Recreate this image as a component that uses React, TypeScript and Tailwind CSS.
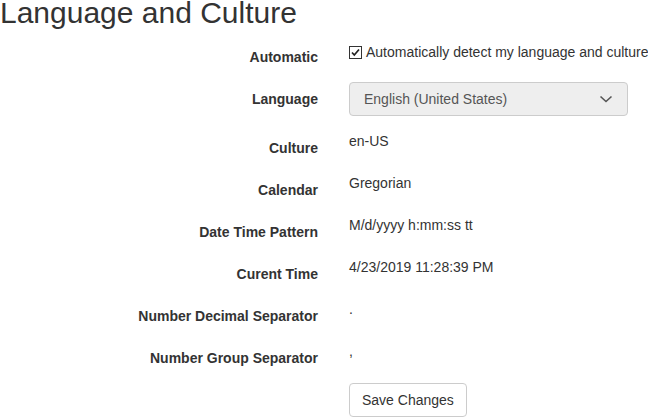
import React from "react";

const Label = ({ children, pt = "pt-[7px]" }: { children: React.ReactNode; pt?: string }) => (
  <div className={`w-[318px] shrink-0 text-right font-bold text-[14px] leading-[20px] text-[#333] ${pt}`}>{children}</div>
);

const Row = ({ label, children }: { label: string; children: React.ReactNode }) => (
  <div className="flex gap-[31px] mb-[15px]">
    <Label>{label}</Label>
    <div className="text-[14px] leading-[20px] text-[#333]">{children}</div>
  </div>
);

export default function App() {
  return (
    <div className="w-[648px] h-[417px] overflow-hidden bg-white text-[#333]" style={{ fontFamily: '"Liberation Sans", Arial, sans-serif' }}>
      <h2 className="text-[30px] leading-[25px] font-normal text-[#333] mb-[15px] whitespace-nowrap">Language and Culture</h2>

      <div className="flex gap-[31px] h-[42px]">
        <Label>Automatic</Label>
        <div className="flex items-start pt-[2px]">
          <div className="flex items-center h-[20px]">
            <span className="w-[13px] h-[13px] border border-[#333] bg-white flex items-center justify-center mr-[4px]">
              <svg width="11" height="11" viewBox="0 0 11 11">
                <path d="M2 5.5 L4.3 8 L9 2.5" fill="none" stroke="#222" strokeWidth="1.7" />
              </svg>
            </span>
            <span className="text-[14px] leading-[20px] text-[#333] whitespace-nowrap">Automatically detect my language and culture</span>
          </div>
        </div>
      </div>

      <div className="flex gap-[31px] mb-[15px]">
        <Label>Language</Label>
        <div className="w-[279px] h-[34px] bg-[#eee] border border-[#ccc] rounded-[4px] flex items-center justify-between pl-[14px] pr-[14px]">
          <span className="text-[14px] text-[#555]">English (United States)</span>
          <svg width="14" height="10" viewBox="0 0 14 10">
            <path d="M1.5 2.5 L7 7.5 L12.5 2.5" fill="none" stroke="#555" strokeWidth="1.6" />
          </svg>
        </div>
      </div>

      <Row label="Culture">en-US</Row>
      <Row label="Calendar">Gregorian</Row>
      <Row label="Date Time Pattern">M/d/yyyy h:mm:ss tt</Row>
      <Row label="Curent Time">4/23/2019 11:28:39 PM</Row>
      <Row label="Number Decimal Separator">.</Row>
      <Row label="Number Group Separator">,</Row>

      <div className="flex gap-[31px]">
        <div className="w-[318px] shrink-0" />
        <button className="h-[34px] px-[12px] border border-[#ccc] rounded-[4px] bg-white text-[14px] text-[#333]">Save Changes</button>
      </div>
    </div>
  );
}
